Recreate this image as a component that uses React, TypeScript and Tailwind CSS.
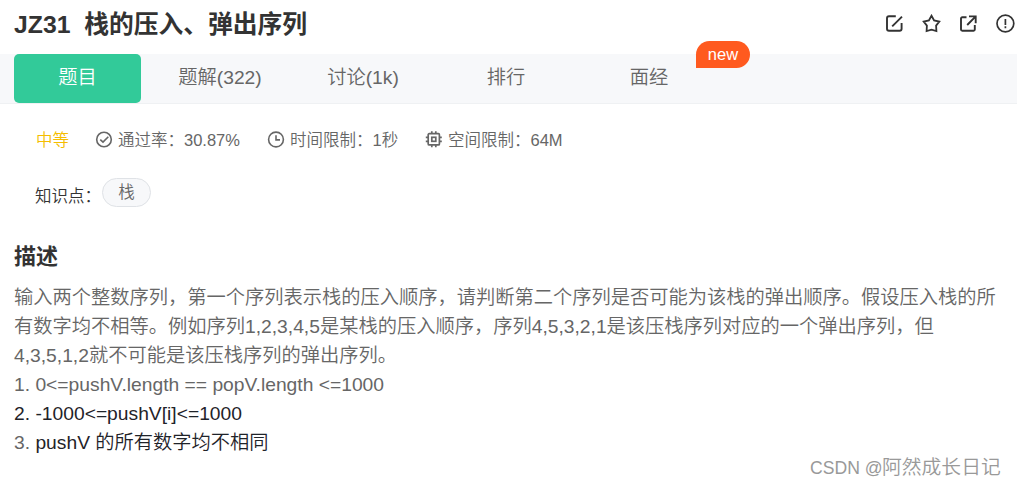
import React from 'react';

const ICON = 'shrink-0 fill-none stroke-current';

function EditIcon() {
  return (
    <svg className={ICON} width="20" height="20" viewBox="0 0 20 20" strokeWidth="1.9">
      <path d="M11.8 2.2H5Q3 2.2 3 4.2V14.7Q3 16.7 5 16.7H15.6Q17.6 16.7 17.6 14.7V9" />
      <path d="M8.2 12.4L18 2.6" />
    </svg>
  );
}

function StarIcon() {
  return (
    <svg className={ICON} width="20" height="20" viewBox="0 0 20 20" strokeWidth="1.8" strokeLinejoin="miter">
      <path d="M10.5 1.7L13.1 6.4L18.3 7.5L15.1 11.6L15.4 17L10.5 15.7L5.6 17L5.9 11.6L2.7 7.5L7.9 6.4Z" />
    </svg>
  );
}

function ShareIcon() {
  return (
    <svg className={ICON} width="20" height="20" viewBox="0 0 20 20" strokeWidth="1.9">
      <path d="M8.5 3.3H4.3Q3 3.3 3 4.5V15.5Q3 16.7 4.3 16.7H15.6Q16.8 16.7 16.8 15.5V11" />
      <path d="M11 2.4H17.7V9.2M17.7 2.4L9.2 11" />
    </svg>
  );
}

function AlertIcon() {
  return (
    <svg className={ICON} width="20" height="20" viewBox="0 0 20 20" strokeWidth="1.7">
      <circle cx="10.4" cy="9.5" r="8.4" />
      <path d="M10.4 5V11M10.4 12.3V14.2" />
    </svg>
  );
}

function CheckIcon() {
  return (
    <svg className={ICON} width="18" height="18" viewBox="0 0 18 18" strokeWidth="1.6">
      <circle cx="9" cy="8.5" r="7.3" />
      <path d="M5.3 8.6L8 11.1L13.3 5.8" />
    </svg>
  );
}

function ClockIcon() {
  return (
    <svg className={ICON} width="18" height="18" viewBox="0 0 18 18" strokeWidth="1.6">
      <circle cx="9" cy="8.5" r="7.4" />
      <path d="M9 4.3V8.9H13" />
    </svg>
  );
}

function ChipIcon() {
  return (
    <svg className={ICON} width="18" height="18" viewBox="0 0 18 18" strokeWidth="1.7">
      <rect x="3.2" y="2.7" width="11.2" height="11.2" rx="1" />
      <rect x="6.8" y="6.3" width="4" height="4" />
      <path d="M6.8 0.3V2.7M10.8 0.3V2.7M6.8 13.9V16.3M10.8 13.9V16.3M0.8 6.3H3.3M0.8 10.3H3.3M14.3 6.3H16.8M14.3 10.3H16.8" />
    </svg>
  );
}

const tabs = ['题解(322)', '讨论(1k)', '排行', '面经'];

export default function App() {
  return (
    <div className="relative h-[487px] w-[1017px] overflow-hidden bg-white font-['Liberation_Sans','Noto_Sans_CJK_SC',sans-serif] font-[350] text-[#666]">
      <header className="flex h-[54px] items-start justify-between pl-3.5 text-[#333]">
        <h1 className="pt-[7px] text-[24.75px] leading-9 font-bold whitespace-pre">JZ31  栈的压入、弹出序列</h1>
        <div className="flex gap-[17px] pt-3.5 pr-[2px]">
          <EditIcon />
          <StarIcon />
          <ShareIcon />
          <AlertIcon />
        </div>
      </header>

      <nav className="flex h-[50px] items-start border-b border-[#eff1f3] bg-[#f7f8fa] pl-3.5 text-[19.25px] leading-[47px]">
        <div className="h-[49px] w-[127px] rounded-[5px] bg-[#32ca99] text-center text-white">题目</div>
        {tabs.map((tab) => (
          <div key={tab} className="relative ml-4 h-[49px] w-[127px] pr-px text-center">
            {tab}
            {tab === '面经' && (
              <span className="absolute top-[-13px] left-[110px] h-[27px] w-[54px] rounded-[14px] rounded-bl-none bg-[#ff5a1f] text-[16.5px] leading-[27px] text-white">new</span>
            )}
          </div>
        ))}
      </nav>

      <div className="mt-[23px] flex h-[26px] items-center pl-9 text-[16.5px] leading-[26px] whitespace-nowrap">
        <span className="w-[59px] text-[#f5bd00]">中等</span>
        <div className="flex w-[172px] items-center gap-[5px]"><CheckIcon /><span>通过率：30.87%</span></div>
        <div className="flex w-[158px] items-center gap-[5px]"><ClockIcon /><span>时间限制：1秒</span></div>
        <div className="flex items-center gap-[5px]"><ChipIcon /><span>空间限制：64M</span></div>
      </div>

      <div className="mt-[25px] flex h-[30px] items-start pl-[35px] text-[16.5px]">
        <span className="w-[67px] pt-[6px] leading-[24px] whitespace-nowrap text-[#333]">知识点：</span>
        <span className="h-[29px] w-[49px] rounded-full border border-[#dfe2e6] bg-[#f7f8fa] text-center leading-[27px]">栈</span>
      </div>

      <section className="pt-[32px] pl-3.5">
        <h2 className="text-[22px] leading-[34px] font-bold text-[#333]">描述</h2>
        <div className="mt-[9px] text-[19.25px] leading-[29px] whitespace-nowrap">
          <p>输入两个整数序列，第一个序列表示栈的压入顺序，请判断第二个序列是否可能为该栈的弹出顺序。假设压入栈的所</p>
          <p>有数字均不相等。例如序列1,2,3,4,5是某栈的压入顺序，序列4,5,3,2,1是该压栈序列对应的一个弹出序列，但</p>
          <p>4,3,5,1,2就不可能是该压栈序列的弹出序列。</p>
          <p>1. 0&lt;=pushV.length == popV.length &lt;=1000</p>
          <p className="text-[#1f2329]">2. -1000&lt;=pushV[i]&lt;=1000</p>
          <p>3. <span className="text-[#1f2329]">pushV 的所有数字均不相同</span></p>
        </div>
      </section>

      <div className="absolute top-[453px] left-[810px] text-[19.8px] leading-[28px] whitespace-nowrap text-[#999]">
        <span className="inline-block w-[72px] text-[17.6px]">CSDN @</span>阿然成长日记
      </div>
    </div>
  );
}
